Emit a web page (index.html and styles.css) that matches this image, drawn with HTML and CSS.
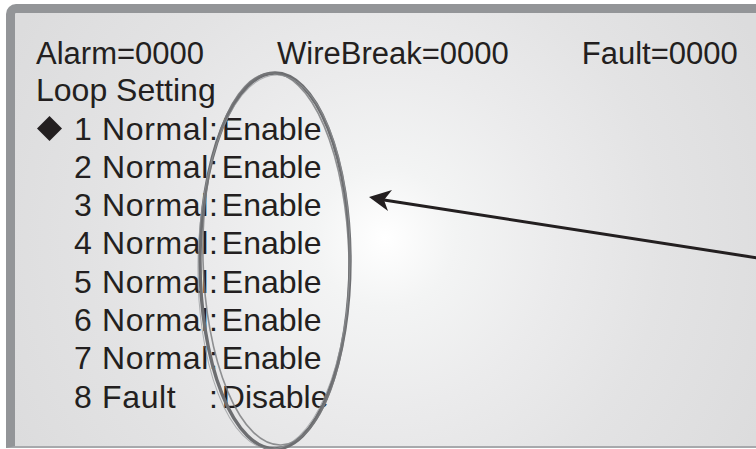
FILE: index.html
```html
<!DOCTYPE html>
<html lang="en">
<head>
  <meta charset="UTF-8">
  <meta name="viewport" content="width=device-width, initial-scale=1.0">
  <title>Loop Setting</title>
  <link rel="stylesheet" href="styles.css">
</head>
<body>

  <div class="screen">
    <div class="status">
      <span>Alarm=0000</span>
      <span>WireBreak=0000</span>
      <span>Fault=0000</span>
    </div>
    <div class="title">Loop Setting</div>

    <div class="loops">
      <span class="mark"><svg width="26" height="26" viewBox="0 0 26 26"><polygon points="13,0 26,13 13,26 0,13" fill="#231f20"/></svg></span>
      <span class="name">1 Normal</span><span class="val">: Enable</span>

      <span class="mark"></span>
      <span class="name">2 Normal</span><span class="val">: Enable</span>

      <span class="mark"></span>
      <span class="name">3 Normal</span><span class="val">: Enable</span>

      <span class="mark"></span>
      <span class="name">4 Normal</span><span class="val">: Enable</span>

      <span class="mark"></span>
      <span class="name">5 Normal</span><span class="val">: Enable</span>

      <span class="mark"></span>
      <span class="name">6 Normal</span><span class="val">: Enable</span>

      <span class="mark"></span>
      <span class="name">7 Normal</span><span class="val">: Enable</span>

      <span class="mark"></span>
      <span class="name">8 Fault</span><span class="val">: Disable</span>
    </div>
  </div>

  <!-- annotation: circled values + pointer -->
  <svg class="notes" width="756" height="449" viewBox="0 0 756 449">
    <ellipse cx="275" cy="261" rx="75" ry="188" fill="none" stroke="#6d6e71" stroke-width="3.4"/>
    <ellipse cx="276" cy="259" rx="73" ry="186" fill="none" stroke="#77787b" stroke-width="1.6" opacity="0.8" transform="rotate(-1.5 276 259)"/>
    <ellipse cx="274" cy="262" rx="76" ry="187" fill="none" stroke="#939598" stroke-width="1" opacity="0.7" transform="rotate(1 274 262)"/>
    <line x1="758" y1="258" x2="384" y2="200" stroke="#231f20" stroke-width="3"/>
    <polygon points="369,197 392,190 384,200 388,211" fill="#231f20"/>
  </svg>

</body>
</html>
```

FILE: styles.css
```css
body {
  margin: 0;
  padding: 0;
  width: 756px;
  height: 449px;
  overflow: hidden;
  position: relative;
  background-color: #fff;
  font-family: "Liberation Sans", Arial, sans-serif;
  color: #231f20;
}

.screen {
  margin: 4px 0 0 6px;
  width: 800px;
  height: 413px;
  padding: 20px 0 0 21px;
  border-top: 9px solid #939598;
  border-left: 9px solid #939598;
  border-bottom: 2px solid #a7a9ac;
  border-top-left-radius: 10px;
  background: radial-gradient(circle at 370px 225px, #ffffff 0, #f3f4f4 70px, #ebebec 170px, #e3e3e4 280px, #dcdcdd 420px);
  font-size: 32px;
  line-height: 38.3px;
}

.status {
  display: flex;
  gap: 73px;
  font-size: 31px;
  padding-top: 2px;
  margin-bottom: -2px;
}

.loops {
  display: grid;
  grid-template-columns: 38px max-content max-content;
}

.mark {
  display: flex;
  align-items: center;
  padding-left: 1px;
}

.mark svg {
  width: 25px;
  height: 25px;
}

.name {
  letter-spacing: 0.65px;
}

.val {
  white-space: pre;
  word-spacing: -5px;
}

.notes {
  position: absolute;
  top: 0;
  left: 0;
  pointer-events: none;
}
```
